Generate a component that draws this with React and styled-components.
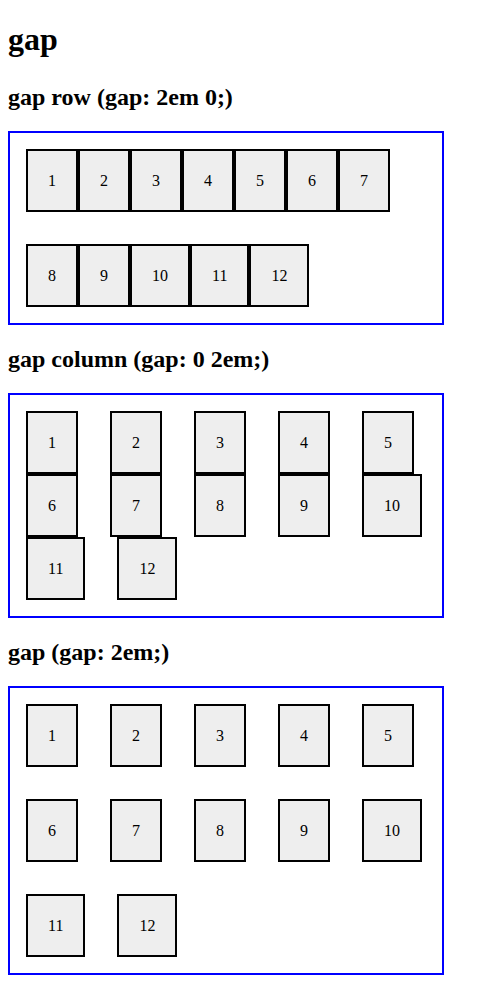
import React from "react";
import styled, { createGlobalStyle } from "styled-components";

const items = Array.from({ length: 12 }, (_, i) => i + 1);

const examples = [
  { title: "gap row (gap: 2em 0;)", gap: "2em 0" },
  { title: "gap column (gap: 0 2em;)", gap: "0 2em" },
  { title: "gap (gap: 2em;)", gap: "2em" },
];

export default function App() {
  return (
    <>
      <GlobalStyle />
      <Title>gap</Title>
      {examples.map((ex) => (
        <section key={ex.title}>
          <SubTitle>{ex.title}</SubTitle>
          <FlexBox $gap={ex.gap}>
            {items.map((n) => (
              <Item key={n}>{n}</Item>
            ))}
          </FlexBox>
        </section>
      ))}
    </>
  );
}

const GlobalStyle = createGlobalStyle`
  body {
    margin: 8px;
    font-family: "Liberation Serif", "Times New Roman", serif;
    font-size: 16px;
    color: #000;
    background: #fff;
  }
`;

const Title = styled.h1`
  font-size: 32px;
  font-weight: bold;
  margin: 13px 0 25px;
`;

const SubTitle = styled.h2`
  font-size: 24px;
  line-height: 28px;
  font-weight: bold;
  margin: 20px 0;
`;

const FlexBox = styled.div`
  display: flex;
  flex-wrap: wrap;
  gap: ${(p) => p.$gap};
  width: 400px;
  padding: 16px;
  border: 2px solid blue;
`;

const Item = styled.div`
  padding: 20px;
  line-height: 19px;
  border: 2px solid black;
  background-color: #eee;
`;
